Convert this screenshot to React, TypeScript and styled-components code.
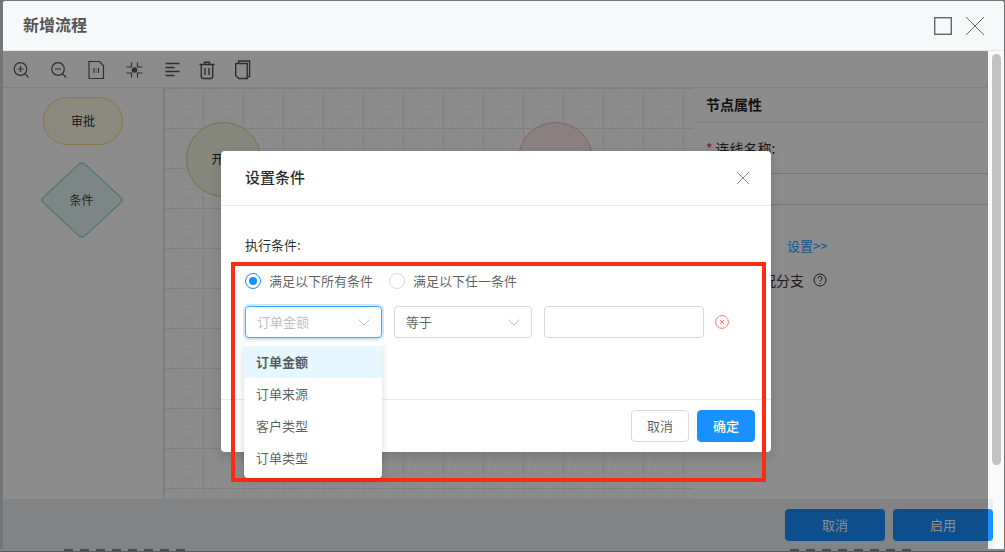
import React from "react";
import styled, { createGlobalStyle } from "styled-components";

const Global = createGlobalStyle`
  html, body { margin: 0; padding: 0; }
  body { font-family: "Noto Sans CJK SC", "Liberation Sans", sans-serif; overflow: hidden; background: #848587; }
  * { box-sizing: border-box; }
`;

const Page = styled.div`
  position: relative;
  width: 1005px;
  height: 552px;
  overflow: hidden;
  background: #747576;
  padding: 1px 1px 0 3px;
  display: flex;
  flex-direction: column;
`;

const Win = styled.div`
  height: 548px;
  flex: none;
  display: flex;
  flex-direction: column;
  border-radius: 3px 3px 0 0;
  overflow: hidden;
  background: #fafafa;
`;

const WinHeader = styled.header`
  height: 50px;
  flex: none;
  background: #f7f8fa;
  border-bottom: 1px solid #e8e8e8;
  display: flex;
  align-items: center;
  padding: 0 20px 0 20px;
`;

const WinTitle = styled.h1`
  margin: 0 0 4px;
  flex: 1;
  font-size: 16px;
  font-weight: 700;
  line-height: 46px;
  color: #555;
`;

const WinTools = styled.div`
  display: flex;
  gap: 14px;
  align-items: center;
`;

const WinBody = styled.div`
  flex: 1;
  display: flex;
  min-height: 0;
`;

const Dimmed = styled.div`
  position: relative;
  flex: 1;
  min-width: 0;
  display: flex;
  flex-direction: column;
  background: #fff;
`;

const Mask = styled.div`
  position: absolute;
  inset: 0;
  background: rgba(0, 0, 0, 0.45);
`;

const ScrollTrack = styled.div`
  width: 16px;
  flex: none;
  background: #fafafa;
  padding: 3px 3px 0 4px;
`;

const ScrollThumb = styled.div`
  height: 411px;
  border-radius: 5px;
  background: #c1c1c1;
`;

const Toolbar = styled.div`
  height: 36px;
  flex: none;
  display: flex;
  align-items: center;
  gap: 17.4px;
  padding: 1px 0 0 8px;
  color: #555;
`;

const ToolIcon = styled.svg<{ $stroke?: number }>`
  width: 20px;
  height: 20px;
  flex: none;
  fill: none;
  stroke: currentColor;
  stroke-width: ${(p) => p.$stroke ?? 1.2};
`;

const Panels = styled.div`
  flex: 1;
  display: flex;
  min-height: 0;
  border-top: 1px solid #e6edf2;
`;

const Palette = styled.aside`
  width: 160px;
  flex: none;
  display: flex;
  flex-direction: column;
  align-items: center;
  gap: 17px;
  padding: 9px 0 0 0;
`;

const Pill = styled.div`
  width: 80px;
  height: 48px;
  border-radius: 24px;
  border: 1px solid #ffd588;
  background: #fff9e8;
  display: flex;
  align-items: center;
  justify-content: center;
  padding-bottom: 2px;
  font-size: 12px;
  color: #333;
`;

const DiamondWrap = styled.div`
  position: relative;
  width: 82px;
  height: 76px;
  margin-right: 3px;
  display: flex;
  align-items: center;
  justify-content: center;
  padding-bottom: 2px;
  font-size: 12px;
  color: #444;
`;

const DiamondArt = styled.svg`
  position: absolute;
  inset: 0;
`;

const DiamondText = styled.span`
  position: relative;
`;

const Canvas = styled.main`
  position: relative;
  width: 530px;
  flex: none;
  border-left: 2px solid #e3eaef;
  overflow: hidden;
  background-color: #fff;
  background-image:
    linear-gradient(#e9e9e9 1px, transparent 1px),
    linear-gradient(90deg, #e9e9e9 1px, transparent 1px),
    linear-gradient(#f7f7f7 1px, transparent 1px),
    linear-gradient(90deg, #f7f7f7 1px, transparent 1px);
  background-size: 40px 40px, 40px 40px, 10px 10px, 10px 10px;
  background-position: -2px 0, -2px 0, -2px 0, -2px 0;
`;

const FlowNode = styled.div<{ $x: number; $bg: string; $line: string }>`
  position: absolute;
  left: ${(p) => p.$x}px;
  top: 34px;
  width: 75px;
  height: 75px;
  border-radius: 50%;
  border: 1px solid ${(p) => p.$line};
  background: ${(p) => p.$bg};
  display: flex;
  align-items: center;
  justify-content: center;
  padding-bottom: 2px;
  font-size: 12px;
  color: #222;
`;

const Props = styled.aside`
  flex: 1;
  min-width: 0;
  display: flex;
  flex-direction: column;
  font-size: 14px;
  color: #333;
`;

const PropsHead = styled.div`
  height: 35px;
  flex: none;
  border-bottom: 1px solid #efefef;
  padding-left: 13px;
  line-height: 32px;
  font-weight: 600;
  font-size: 14px;
  color: #222;
`;

const PropsForm = styled.div`
  padding: 14px 0 0 13px;
  display: flex;
  flex-direction: column;
  line-height: 22px;
`;

const Star = styled.span`
  color: #f5222d;
  margin-right: 3px;
`;

const FieldLine = styled.div`
  height: 32px;
  margin: 14px 0 0 0;
  border-top: 1px solid #d9d9d9;
  border-bottom: 1px solid #d9d9d9;
`;

const LinkRow = styled.div`
  margin: 30px 0 0 81px;
  color: #25a0ff;
  font-size: 13px;
`;

const BranchRow = styled.div`
  margin-top: 12px;
  display: flex;
  align-items: center;
  gap: 8px;
  white-space: nowrap;
`;

const BranchLabel = styled.span`
  width: 99px;
  font-size: 14px;
`;

const WinFooter = styled.footer`
  height: 50px;
  flex: none;
  background: #eceef2;
  display: flex;
  justify-content: flex-end;
  gap: 8px;
  padding: 10px 0 0 0;
  margin-right: -5px;
`;

const MainButton = styled.button`
  width: 100px;
  height: 32px;
  border: 0;
  border-radius: 4px;
  padding: 0 0 2px;
  background: #1890ff;
  color: #fff;
  font: inherit;
  font-size: 13px;
`;

const Behind = styled.div`
  flex: none;
  height: 3px;
  overflow: hidden;
  display: flex;
  background: #848587;
  border-bottom: 1px solid #58595a;
  margin: 0 -1px 0 -3px;
  padding-left: 64px;
`;

const BehindMark = styled.span<{ $w: number; $gap?: number }>`
  display: block;
  width: ${(p) => p.$w}px;
  height: 2px;
  margin-left: ${(p) => p.$gap ?? 0}px;
  background: repeating-linear-gradient(90deg, #4a4a4a 0 9px, transparent 9px 16px);
`;

const Dialog = styled.section`
  position: absolute;
  left: 221px;
  top: 151px;
  width: 550px;
  height: 301px;
  background: #fff;
  border-radius: 4px;
  box-shadow: 0 4px 12px rgba(0, 0, 0, 0.15);
  display: flex;
  flex-direction: column;
`;

const DialogHead = styled.div`
  height: 55px;
  flex: none;
  border-bottom: 1px solid #e8e8e8;
  display: flex;
  align-items: center;
  justify-content: space-between;
  padding: 0 22px 1px 24px;
`;

const DialogTitle = styled.h2`
  margin: 0 0 2px;
  font-size: 15px;
  font-weight: 500;
  color: rgba(0, 0, 0, 0.85);
`;

const DialogBody = styled.div`
  height: 193px;
  flex: none;
  padding: 28px 24px 0;
  font-size: 13px;
  color: rgba(0, 0, 0, 0.65);
`;

const FormLabel = styled.div`
  line-height: 22px;
  color: rgba(0, 0, 0, 0.85);
`;

const RadioRow = styled.div`
  margin-top: 13px;
  height: 22px;
  display: flex;
  align-items: center;
  gap: 16px;
`;

const RadioItem = styled.label`
  display: flex;
  align-items: center;
  gap: 8px;
`;

const RadioDot = styled.span<{ $on?: boolean }>`
  width: 16px;
  height: 16px;
  margin-top: 1px;
  border-radius: 50%;
  border: 1px solid ${(p) => (p.$on ? "#1890ff" : "#d9d9d9")};
  display: flex;
  align-items: center;
  justify-content: center;
  &::after {
    content: "";
    width: 8px;
    height: 8px;
    border-radius: 50%;
    background: ${(p) => (p.$on ? "#1890ff" : "transparent")};
  }
`;

const CondRow = styled.div`
  margin-top: 15px;
  display: flex;
  align-items: center;
  gap: 12px;
`;

const SelectBox = styled.div<{ $w: number; $focus?: boolean; $muted?: boolean }>`
  width: ${(p) => p.$w}px;
  height: 32px;
  border: 1px solid ${(p) => (p.$focus ? "#40a9ff" : "#d9d9d9")};
  box-shadow: ${(p) => (p.$focus ? "0 0 0 2px rgba(24,144,255,.2)" : "none")};
  border-radius: 4px;
  padding: 0 11px 1px;
  display: flex;
  align-items: center;
  justify-content: space-between;
  color: ${(p) => (p.$muted ? "#bfbfbf" : "rgba(0,0,0,.65)")};
`;

const Chevron = styled.svg`
  width: 12px;
  height: 12px;
  fill: none;
  stroke: #bfbfbf;
  stroke-width: 1;
`;

const RemoveIcon = styled.svg`
  width: 14px;
  height: 14px;
  margin-left: -1px;
  fill: none;
  stroke: #ff7875;
  stroke-width: 1;
`;

const DialogFoot = styled.div`
  flex: 1;
  border-top: 1px solid #e8e8e8;
  display: flex;
  justify-content: flex-end;
  gap: 8px;
  padding: 10px 16px 0 0;
`;

const DialogButton = styled.button<{ $primary?: boolean }>`
  width: 58px;
  height: 32px;
  border-radius: 4px;
  padding: 0 0 2px;
  border: 1px solid ${(p) => (p.$primary ? "#1890ff" : "#d9d9d9")};
  background: ${(p) => (p.$primary ? "#1890ff" : "#fff")};
  color: ${(p) => (p.$primary ? "#fff" : "rgba(0,0,0,.65)")};
  font: inherit;
  font-size: 13px;
  font-weight: ${(p) => (p.$primary ? 500 : 400)};
`;

const Menu = styled.ul`
  position: absolute;
  left: 244px;
  top: 342px;
  width: 138px;
  height: 136px;
  margin: 0;
  padding: 4px 0;
  list-style: none;
  background: #fff;
  border-radius: 4px;
  box-shadow: 0 2px 8px rgba(0, 0, 0, 0.15);
`;

const MenuItem = styled.li<{ $active?: boolean }>`
  height: 32px;
  line-height: 32px;
  padding-left: 12px;
  font-size: 13px;
  background: ${(p) => (p.$active ? "#e6f7ff" : "transparent")};
  font-weight: ${(p) => (p.$active ? 600 : 400)};
  color: rgba(0, 0, 0, 0.65);
`;

const Annotation = styled.div`
  position: absolute;
  left: 231px;
  top: 262px;
  width: 535px;
  height: 220px;
  border: 4px solid #ff2a12;
  pointer-events: none;
`;

const Cross = ({ size, color }: { size: number; color: string }) => (
  <svg width={size} height={size} viewBox="0 0 18 18" fill="none" stroke={color} strokeWidth={18 / size}>
    <path d="M0 0L18 18M18 0L0 18" />
  </svg>
);

const ChevronDown = () => (
  <Chevron viewBox="0 0 12 12">
    <path d="M.5 3.5L6 9l5.5-5.5" />
  </Chevron>
);

export default function App() {
  return (
    <Page>
      <Global />
      <Win>
        <WinHeader>
          <WinTitle>新增流程</WinTitle>
          <WinTools>
            <svg width="18" height="18" viewBox="0 0 18 18" fill="none" stroke="#666" strokeWidth="1.4">
              <rect x=".7" y=".7" width="16.6" height="16.6" />
            </svg>
            <Cross size={18} color="#666" />
          </WinTools>
        </WinHeader>
        <WinBody>
          <Dimmed>
            <Toolbar>
              <ToolIcon viewBox="0 0 20 20">
                <circle cx="9.5" cy="9" r="6.3" />
                <path d="M14 13.7L17.5 17.5M6.5 9h6M9.5 6v6" />
              </ToolIcon>
              <ToolIcon viewBox="0 0 20 20">
                <circle cx="10" cy="9" r="6.3" />
                <path d="M14.5 13.7L18 17.5M7 9h6" />
              </ToolIcon>
              <ToolIcon viewBox="0 0 20 20">
                <path d="M3 1.5h10.5l4 4.3v12.7H3z" />
                <path d="M8 8v5M12.5 8v5M10.2 8.8v.8M10.2 11.6v.8" />
              </ToolIcon>
              <ToolIcon viewBox="0 0 20 20">
                <circle cx="11.5" cy="10" r="2.2" fill="currentColor" />
                <path d="M8.5 2.5v4.5H3.5M14.5 2.5v4.5h5M8.5 17.5V13H3.5M14.5 17.5V13h5" />
              </ToolIcon>
              <ToolIcon viewBox="0 0 20 20" $stroke={1.5}>
                <path d="M4.5 3.5h14M4.5 7.5h9M4.5 11.5h14M4.5 15.5h9" />
              </ToolIcon>
              <ToolIcon viewBox="0 0 20 20" $stroke={1.4}>
                <path d="M1.5 4.5h15M6.5 4.5V2.2h5v2.3M3.3 4.5v12a2 2 0 0 0 2 2h7.4a2 2 0 0 0 2-2v-12M7 8v7M11 8v7" />
              </ToolIcon>
              <ToolIcon viewBox="0 0 20 20" $stroke={1.4}>
                <path d="M3.6 3.5V1h11v15.5H12" />
                <path d="M.7 3.5h11.5v15H3.7l-3-3z" />
              </ToolIcon>
            </Toolbar>
            <Panels>
              <Palette>
                <Pill>审批</Pill>
                <DiamondWrap>
                  <DiamondArt viewBox="0 0 82 76" width="82" height="76">
                    <path
                      d="M37.5 2.6Q41 -.6 44.5 2.6L79.5 35Q83 38 79.5 41L44.5 73.4Q41 76.6 37.5 73.4L2.5 41Q-1 38 2.5 35Z"
                      fill="#e2f5f3"
                      stroke="#5cc6bb"
                    />
                  </DiamondArt>
                  <DiamondText>条件</DiamondText>
                </DiamondWrap>
              </Palette>
              <Canvas>
                <FlowNode $x={21} $bg="#f4f8e6" $line="#bcdc8a">
                  开始
                </FlowNode>
                <FlowNode $x={353} $bg="#fbeaea" $line="#eeb4b4">
                  结束
                </FlowNode>
              </Canvas>
              <Props>
                <PropsHead>节点属性</PropsHead>
                <PropsForm>
                  <div>
                    <Star>*</Star>连线名称:
                  </div>
                  <FieldLine />
                  <LinkRow>设置&gt;&gt;</LinkRow>
                  <BranchRow>
                    <BranchLabel>是其他情况分支</BranchLabel>
                    <svg width="14" height="14" viewBox="0 0 14 14" fill="none" stroke="#333">
                      <circle cx="7" cy="7" r="6" />
                      <path d="M5 5.5a2 2 0 1 1 2.8 1.8c-.6.3-.8.7-.8 1.4M7 10v1" />
                    </svg>
                  </BranchRow>
                </PropsForm>
              </Props>
            </Panels>
            <WinFooter>
              <MainButton>取消</MainButton>
              <MainButton>启用</MainButton>
            </WinFooter>
            <Mask />
          </Dimmed>
          <ScrollTrack>
            <ScrollThumb />
          </ScrollTrack>
        </WinBody>
      </Win>
      <Behind>
        <BehindMark $w={126} />
        <BehindMark $w={126} $gap={600} />
      </Behind>

      <Dialog>
        <DialogHead>
          <DialogTitle>设置条件</DialogTitle>
          <Cross size={12} color="#888" />
        </DialogHead>
        <DialogBody>
          <FormLabel>执行条件:</FormLabel>
          <RadioRow>
            <RadioItem>
              <RadioDot $on />
              满足以下所有条件
            </RadioItem>
            <RadioItem>
              <RadioDot />
              满足以下任一条件
            </RadioItem>
          </RadioRow>
          <CondRow>
            <SelectBox $w={137} $focus $muted>
              订单金额
              <ChevronDown />
            </SelectBox>
            <SelectBox $w={138}>
              等于
              <ChevronDown />
            </SelectBox>
            <SelectBox $w={160} />
            <RemoveIcon viewBox="0 0 14 14">
              <circle cx="7" cy="7" r="6.4" />
              <path d="M5 5l4 4M9 5l-4 4" />
            </RemoveIcon>
          </CondRow>
        </DialogBody>
        <DialogFoot>
          <DialogButton>取消</DialogButton>
          <DialogButton $primary>确定</DialogButton>
        </DialogFoot>
      </Dialog>
      <Annotation />
      <Menu>
        <MenuItem $active>订单金额</MenuItem>
        <MenuItem>订单来源</MenuItem>
        <MenuItem>客户类型</MenuItem>
        <MenuItem>订单类型</MenuItem>
      </Menu>
    </Page>
  );
}
